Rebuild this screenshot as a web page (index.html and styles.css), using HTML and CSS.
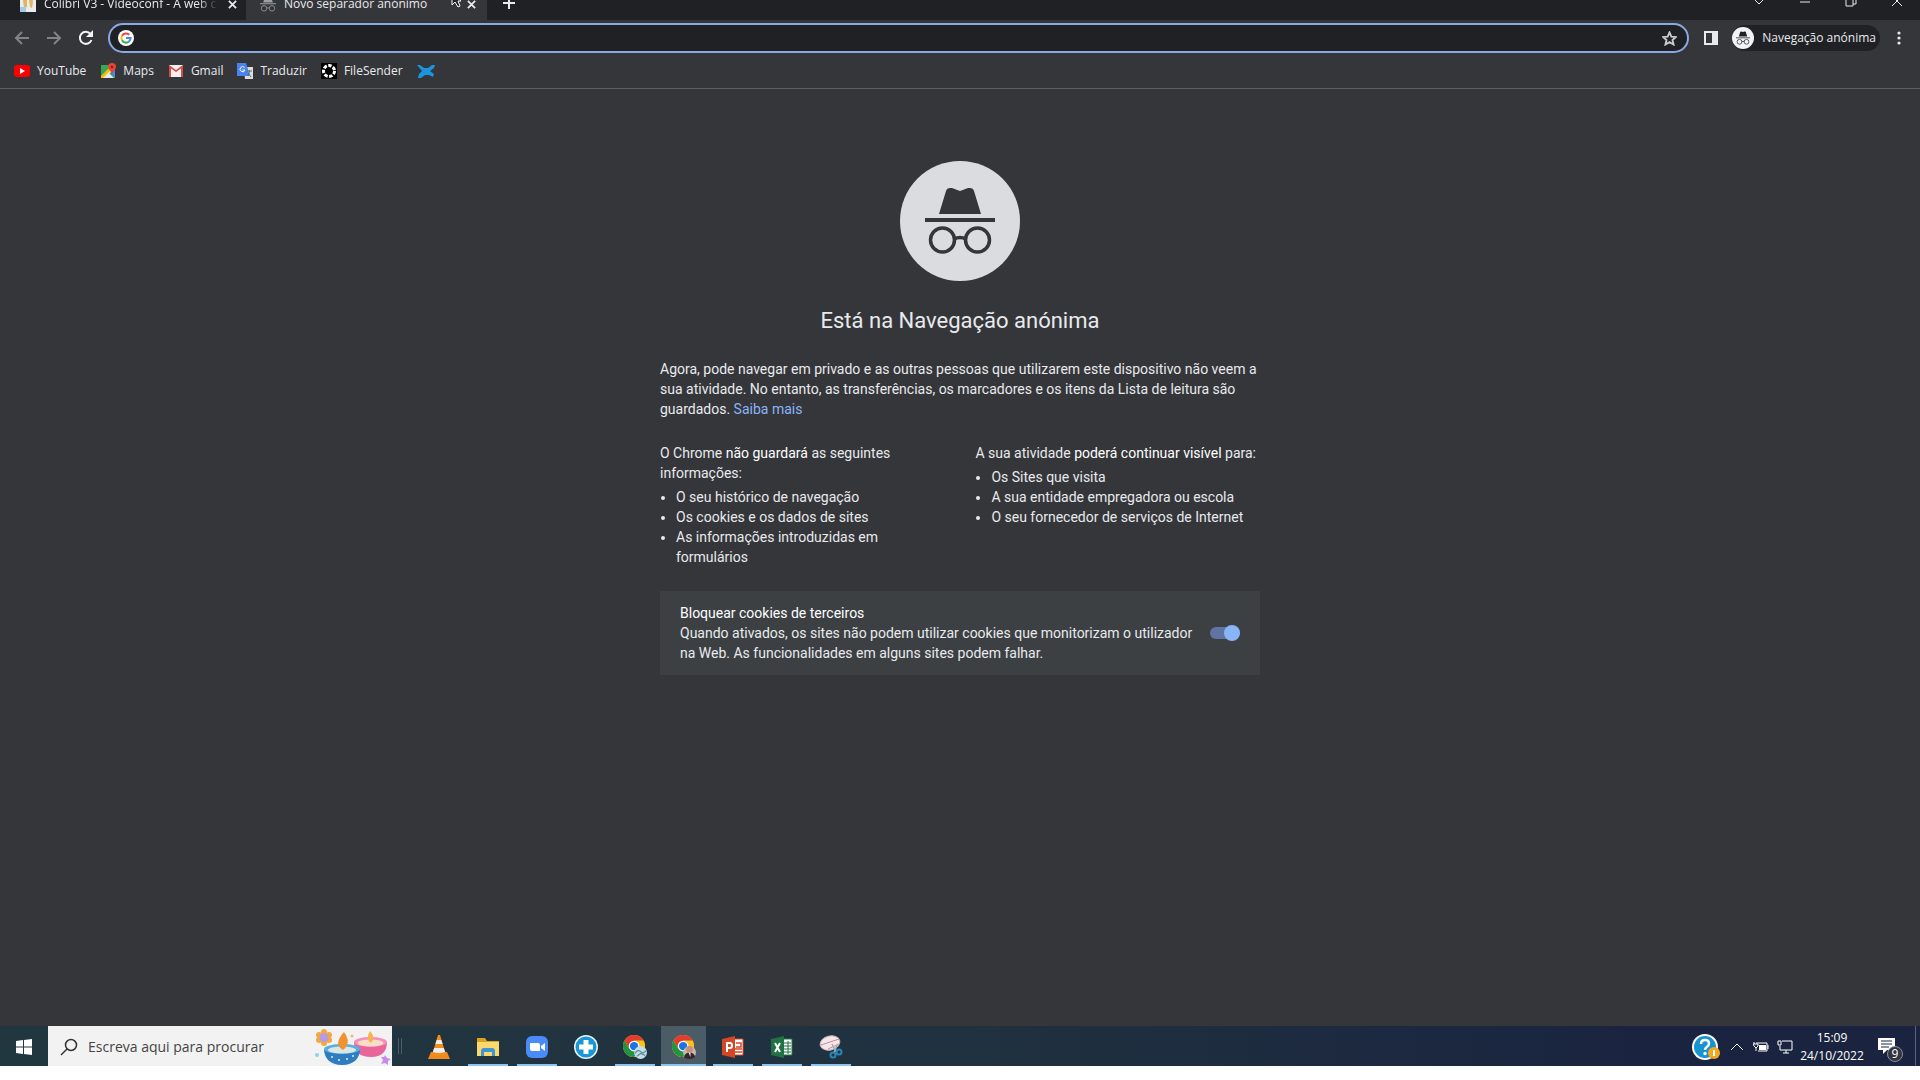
FILE: index.html
```html
<!DOCTYPE html>
<html lang="pt-PT">
<head>
<meta charset="utf-8">
<title>Novo separador anónimo</title>
<link rel="stylesheet" href="styles.css">
</head>
<body>
<svg class="defs" aria-hidden="true">
  <symbol id="spy" viewBox="0 0 70 68">
    <path fill="currentColor" d="M21 4q1-3 4-3l2 0 8 3 8-3 2 0q3 0 4 3l7 23H14zM0 31h70v4H0z"/>
    <g fill="none" stroke="currentColor" stroke-width="3.500"><circle cx="17.500" cy="53" r="12"/><circle cx="52.500" cy="53" r="12"/><path d="M29 52q6-3 12 0"/></g>
  </symbol>
  <symbol id="close" viewBox="0 0 10 10"><path d="M1 1l8 8M9 1L1 9" fill="none" stroke="currentColor" stroke-width="2"/></symbol>
  <symbol id="chrome" viewBox="0 0 24 24">
    <circle cx="12" cy="12" r="12" fill="#fbc116"/>
    <path fill="#e33b2e" d="M1.600 6A12 12 0 0 1 22.400 6H12L7 15z"/>
    <path fill="#229342" d="M1.600 6A12 12 0 0 0 12 24l5.200-9L12 12 6.800 15z"/>
    <circle cx="12" cy="12" r="5.800" fill="#fff"/><circle cx="12" cy="12" r="4.500" fill="#1a73e8"/>
  </symbol>
</svg>

<header class="browser">
  <div class="tabstrip">
    <div class="tab">
      <svg class="icon" viewBox="0 0 16 16"><path fill="#e8ecec" d="M0 0h16v16H0z"/><path fill="#e3b55c" d="M3 4q3-3 4 1v6l-3 1zM9 3q4-1 4 3l-1 6-2-1z"/><path fill="#a4c8e8" d="M0 11h6v5H0z"/></svg>
      <span class="tab-title faded">Colibri V3 - Videoconf - A web conferencing</span>
      <button class="tab-close" aria-label="Fechar separador"><svg><use href="#close"/></svg></button>
    </div>
    <div class="tab active">
      <svg class="icon muted"><use href="#spy"/></svg>
      <span class="tab-title">Novo separador anónimo</span>
      <svg class="pointer" viewBox="0 0 10 20"><path fill="#202124" stroke="#fff" d="M1 1v16l3-3 3 5 2-1-2-5h3z"/></svg>
      <button class="tab-close" aria-label="Fechar separador"><svg><use href="#close"/></svg></button>
    </div>
    <button class="new-tab" aria-label="Novo separador"><svg viewBox="0 0 12 12"><path d="M6 0v12M0 6h12" stroke="currentColor" stroke-width="2"/></svg></button>
    <div class="window-controls">
      <button aria-label="Pesquisar separadores"><svg viewBox="0 0 12 12"><path d="M2 5l4 4 4-4"/></svg></button>
      <button aria-label="Minimizar"><svg viewBox="0 0 12 12"><path d="M1 7h10"/></svg></button>
      <button aria-label="Restaurar"><svg viewBox="0 0 12 12"><path d="M1 3h7v8H1zM3 3V1h8v8H8"/></svg></button>
      <button aria-label="Fechar"><svg viewBox="0 0 12 12"><path d="M1 1l10 10M11 1L1 11"/></svg></button>
    </div>
  </div>

  <div class="toolbar">
    <button class="nav dim" aria-label="Recuar"><svg viewBox="0 0 16 16"><path d="M15 8H2M8 2L2 8l6 6"/></svg></button>
    <button class="nav dim" aria-label="Avançar"><svg viewBox="0 0 16 16"><path d="M1 8h13M8 2l6 6-6 6"/></svg></button>
    <button class="nav" aria-label="Atualizar"><svg viewBox="0 0 16 16"><path d="M13.500 10A6 6 0 1 1 12.500 4"/><path class="solid" d="M15 0v7H8z"/></svg></button>
    <div class="omnibox">
      <svg class="google" viewBox="0 0 16 16"><circle cx="8" cy="8" r="8" fill="#fff"/><g fill="none" stroke-width="2"><path stroke="#ea4335" d="M4 5.700A4.600 4.600 0 0 1 11.300 4.800"/><path stroke="#fbbc05" d="M4 5.700a4.600 4.600 0 0 0 0 4.600"/><path stroke="#34a853" d="M4 10.300a4.600 4.600 0 0 0 7 1.200"/><path stroke="#4285f4" d="M11 11.500A4.500 4.500 0 0 0 12.600 8H8"/></g></svg>
      <input type="text" aria-label="Barra de endereço">
      <button class="star" aria-label="Adicionar aos marcadores"><svg viewBox="0 0 16 16"><path d="M8 1.500l2 4.500 4.800.4-3.600 3.200 1.100 4.800L8 11.900l-4.300 2.500 1.100-4.800L1.200 6.400 6 6z"/></svg></button>
    </div>
    <button class="panel" aria-label="Painel lateral"><svg viewBox="0 0 14 14"><path fill="currentColor" fill-rule="evenodd" d="M0 0h14v14H0zM2 2v10h6V2z"/></svg></button>
    <button class="profile"><span class="avatar"><svg><use href="#spy"/></svg></span>Navegação anónima</button>
    <button class="menu" aria-label="Menu"><svg viewBox="0 0 4 14"><circle cx="2" cy="2" r="1.600"/><circle cx="2" cy="7" r="1.600"/><circle cx="2" cy="12" r="1.600"/></svg></button>
  </div>

  <nav class="bookmarks">
    <a href="#"><svg class="icon" viewBox="0 0 16 16"><rect y="2" width="16" height="12" rx="3" fill="#f00"/><path fill="#fff" d="M6 5l5 3-5 3z"/></svg>YouTube</a>
    <a href="#"><svg class="icon" viewBox="0 0 16 16"><path fill="#34a853" d="M1 2h14v13H1z"/><path fill="#4285f4" d="M9 8l6 6V7z"/><path fill="#e8eaed" d="M2 15l6-6 6 6zM12 2l3 3-8 8-2-2z"/><path fill="#fbbc05" d="M1 13L10 4l2 2-9 9H1z"/><path fill="#ea4335" d="M12 0a4 4 0 0 0-4 4c0 2 3 4 4 7 1-3 4-5 4-7a4 4 0 0 0-4-4z"/><circle cx="12" cy="4" r="1.300" fill="#8b1f16"/></svg>Maps</a>
    <a href="#"><svg class="icon" viewBox="0 0 16 16"><path fill="#f1f1f1" d="M1 2h14v12H1z"/><path fill="#d54b45" d="M1 2l7 5 7-5v2l-7 5-7-5zM1 3h2v11H1zM13 3h2v11h-2z"/></svg>Gmail</a>
    <a href="#"><svg class="icon" viewBox="0 0 16 16"><path fill="#dadce0" d="M7 4h9v12H8z"/><path fill="#4b83ec" d="M0 0h9l4 13H0z"/><path d="M7.500 4.500A2.500 2.500 0 1 0 8 7H5.500" fill="none" stroke="#fff"/><path d="M10 8h5M12.500 7v1c0 2-1 4-2 5M11 10l3 4" fill="none" stroke="#5f6b80"/></svg>Traduzir</a>
    <a href="#"><svg class="icon" viewBox="0 0 16 16"><path d="M0 0h16v16H0z"/><circle cx="8" cy="8" r="5.500" fill="none" stroke="#fff" stroke-width="3" stroke-dasharray="3.400 1.500"/></svg>FileSender</a>
    <a href="#" aria-label="Marcador"><svg class="bird" viewBox="0 0 18 16"><path fill="#1a94dc" d="M0 2l3 0 4 3h4l4-3 3 0-1 3-4 3 4 3-1 3-4-2H8l-4 3H1l1-4 3-3z"/></svg></a>
  </nav>
</header>

<main>
  <div class="content">
    <div class="hero"><svg><use href="#spy"/></svg></div>
    <h1>Está na Navegação anónima</h1>
    <p>Agora, pode navegar em privado e as outras pessoas que utilizarem este dispositivo não veem a sua atividade. No entanto, as transferências, os marcadores e os itens da Lista de leitura são guardados. <a href="#">Saiba mais</a></p>
    <div class="columns">
      <section>
        O Chrome <em>não guardará</em> as seguintes informações:
        <ul><li>O seu histórico de navegação</li><li>Os cookies e os dados de sites</li><li>As informações introduzidas em formulários</li></ul>
      </section>
      <section>
        A sua atividade <em>poderá continuar visível</em> para:
        <ul><li>Os Sites que visita</li><li>A sua entidade empregadora ou escola</li><li>O seu fornecedor de serviços de Internet</li></ul>
      </section>
    </div>
    <div class="cookies">
      <label for="block"><em>Bloquear cookies de terceiros</em><span>Quando ativados, os sites não podem utilizar cookies que monitorizam o utilizador na Web. As funcionalidades em alguns sites podem falhar.</span></label>
      <input type="checkbox" id="block" checked>
    </div>
  </div>
</main>

<footer class="taskbar">
  <button class="start" aria-label="Iniciar"><svg viewBox="0 0 16 16"><path fill="#fff" d="M0 2l7-1v6.500H0zM8 1l8-1v7.500H8zM0 8.500h7V15l-7-1zM8 8.500h8V16l-8-1z"/></svg></button>
  <div class="search">
    <svg class="lens" viewBox="0 0 18 18"><circle cx="11" cy="7" r="5.500"/><path d="M7 11l-6 6"/></svg>
    <input type="text" aria-label="Procurar" placeholder="Escreva aqui para procurar">
    <svg class="candles" viewBox="0 0 78 38">
      <g fill="#f3a93b"><circle cx="10" cy="4" r="3"/><circle cx="15" cy="7" r="3"/><circle cx="15" cy="12" r="3"/><circle cx="10" cy="15" r="3"/><circle cx="5" cy="12" r="3"/><circle cx="5" cy="7" r="3"/></g><circle cx="10" cy="9.500" r="4.500" fill="#b69ae8"/>
      <path fill="#e8649a" d="M40 14c0 10 6 15 17 15s16-6 16-15z"/><ellipse cx="56.500" cy="14" rx="16.500" ry="5" fill="#f38fb8"/><ellipse cx="56.500" cy="15" rx="13" ry="3.500" fill="#fbdcc8"/><path fill="#f7b24a" d="M56 3q6 6 1 12-6-4-1-12z"/>
      <path fill="#2d7dc0" d="M10 21c0 9 6 16 18 16s18-7 18-16z"/><ellipse cx="28" cy="21" rx="18" ry="5" fill="#5baee2"/><ellipse cx="28" cy="22" rx="14" ry="3.500" fill="#d8e8e4"/><path fill="#f29130" d="M30 4q8 11-1 18-10-6 1-18z"/>
      <g fill="#dff0fb"><circle cx="18" cy="29" r="1"/><circle cx="25" cy="32" r="1"/><circle cx="33" cy="31" r="1"/><circle cx="39" cy="28" r="1"/></g>
      <path fill="#c88be8" d="M71 27l2 3 4 1-3 2v4l-3-2-4 1 2-4-2-3h3z"/><circle cx="3" cy="27" r="2" fill="#8fd0ee"/><circle cx="38" cy="8" r="1.500" fill="#f3b85a"/>
    </svg>
  </div>
  <span class="grip"></span>
  <div class="apps">
    <button aria-label="VLC"><svg viewBox="0 0 24 24"><path fill="#f08a1d" d="M4 17h16l3 7H1z"/><path fill="#f28c1c" d="M11 0h2l6 20q-7 3-14 0z"/><path fill="#f1ede8" d="M9.700 5h4.600l1.300 4H8.400zM7.200 13h9.600l1.400 4q-6 2-12.400 0z"/></svg></button>
    <button class="open" aria-label="Explorador de ficheiros"><svg viewBox="0 0 24 24"><path fill="#d9a321" d="M1 3h8l2 3h12v5H1z"/><path fill="#fbd86c" d="M1 7h22v14H1z"/><path fill="#3f95d3" d="M5 21v-5q0-3 3-3h8q3 0 3 3v5h-3v-4H8v4z"/></svg></button>
    <button class="open" aria-label="Zoom"><svg viewBox="0 0 24 24"><rect x="1" y="1" width="22" height="22" rx="6" fill="#4a8cf7"/><path fill="#fff" d="M5 8h8q2 0 2 2v6H7q-2 0-2-2zM16 11l4-3v8l-4-3z"/></svg></button>
    <button aria-label="Suporte"><svg viewBox="0 0 24 24"><circle cx="12" cy="12" r="12" fill="#e8f6fc"/><circle cx="12" cy="12" r="10.500" fill="#1b96d5"/><path fill="#fff" d="M9.500 5h5v4.500H19v5h-4.500V19h-5v-4.500H5v-5h4.500z"/></svg></button>
    <button class="open" aria-label="Chrome"><svg viewBox="0 0 26 26"><use href="#chrome" width="24" height="24"/><circle cx="19" cy="19" r="7" fill="#c3dfe8"/><path d="M13 20q3-5 6-2t6-1M15 23l4-3 5 2" fill="none" stroke="#668b9c" stroke-width="1.500"/></svg></button>
    <button class="open current" aria-label="Chrome anónimo"><svg viewBox="0 0 26 26"><use href="#chrome" width="24" height="24"/><circle cx="19" cy="19" r="7" fill="#c7b7aa"/><path fill="#33262e" d="M13 24q1-5 6-5t6 5q-6 4-12 0z"/><circle cx="19" cy="15.500" r="3.500" fill="#c88e78"/><path fill="#fff" d="M18 19h2v5z"/></svg></button>
    <button class="open" aria-label="PowerPoint"><svg viewBox="0 0 24 24"><path fill="#fff" stroke="#d24726" d="M12 4h10v16H12z"/><path d="M15 8h5v4h-5M14 14h7M14 17h7" fill="none" stroke="#d24726" stroke-width="1.500"/><path fill="#d24726" d="M1 4l13-3v22L1 20z"/><path d="M6 17V8h3q2 0 2 2.500T9 13H6" fill="none" stroke="#fff" stroke-width="2"/></svg></button>
    <button class="open" aria-label="Excel"><svg viewBox="0 0 24 24"><path fill="#fff" stroke="#207245" d="M12 4h10v16H12z"/><path d="M14 8h7M14 11h7M14 14h7M14 17h7M18 6v13" stroke="#207245"/><path fill="#207245" d="M1 4l13-3v22L1 20z"/><path d="M5 8l5 9M10 8l-5 9" stroke="#fff" stroke-width="2"/></svg></button>
    <button class="open" aria-label="Ferramenta de recorte"><svg viewBox="0 0 24 24"><ellipse cx="11" cy="8" rx="10" ry="7" transform="rotate(-15 11 8)" fill="#f3e7ea" stroke="#c9b6bd"/><path d="M2 10l18-6M9 14L20 9" stroke="#c98a92"/><path d="M13 9l4 8M18 10l-3 8" stroke="#9fb0ba" stroke-width="1.500"/><circle cx="14" cy="20" r="2.500" fill="none" stroke="#2b86b8" stroke-width="2"/><circle cx="20" cy="17" r="2.500" fill="none" stroke="#2b86b8" stroke-width="2"/></svg></button>
  </div>
  <div class="tray">
    <button class="help" aria-label="Ajuda"><svg viewBox="0 0 28 28"><circle cx="13" cy="14" r="13" fill="#fff"/><circle cx="13" cy="14" r="11" fill="#1793cf"/><path d="M9 11q0-4 4-4t4 3.500q0 2-2 3.200t-2 3.300" fill="none" stroke="#fff" stroke-width="2.500"/><circle cx="13" cy="20.500" r="1.700" fill="#fff"/><circle cx="22" cy="20" r="6" fill="#f5a81c"/><path d="M22 17v6" stroke="#fff" stroke-width="2"/></svg></button>
    <button class="small" aria-label="Mostrar ícones ocultos"><svg viewBox="0 0 16 16"><path d="M2 11l6-6 6 6"/></svg></button>
    <button class="small" aria-label="Bateria"><svg viewBox="0 0 16 16"><path d="M5 4h9v8H5M15 6v4M3 8v4M1 3v2M4 3v2M0 5h5v2l-2 2-2-2z"/><path class="solid" d="M6 6h7v5H6z"/></svg></button>
    <button class="small" aria-label="Rede"><svg viewBox="0 0 16 16"><path d="M5 2h10v9H3V7M1 2h3v4H1zM9 11v3M6 14h6"/></svg></button>
    <div class="clock"><time>15:09</time><span>24/10/2022</span></div>
    <button class="notes" aria-label="Notificações"><svg viewBox="0 0 18 18"><path fill="#fff" d="M0 0h17v12h-8l-4 4v-4H0z"/><path d="M3 3h11M3 6h11M3 9h8" stroke="#1a2340"/></svg><span class="badge">9</span></button>
  </div>
</footer>
</body>
</html>
```
FILE: styles.css
```css
* { box-sizing: border-box; }
body {
  margin: 0;
  min-height: 100vh;
  display: flex;
  flex-direction: column;
  background: #fff;
  font: 12px/16px "Open Sans", "Noto Sans", sans-serif;
  color: #e8eaed;
}
button {
  display: flex;
  align-items: center;
  justify-content: center;
  flex: none;
  padding: 0;
  border: 0;
  background: none;
  color: inherit;
  font: inherit;
}
svg { display: block; flex: none; }
a { color: inherit; text-decoration: none; }
em { font-style: normal; color: #fff; }
.defs { position: absolute; width: 0; height: 0; }
.icon { width: 16px; height: 16px; }

.browser { background: #35363a; border-bottom: 1px solid #5b5d61; }
.tabstrip {
  display: flex;
  align-items: flex-end;
  height: 20px;
  overflow: hidden;
  background: #202124;
}
.tab {
  display: flex;
  align-items: center;
  gap: 8px;
  flex: none;
  width: 246px;
  height: 32px;
  padding: 0 8px 0 20px;
}
.tab.active { width: 241px; padding: 0 10px 0 14px; background: #35363a; border-radius: 8px 8px 0 0; }
.tab-title { flex: 1; overflow: hidden; white-space: nowrap; }
.faded { mask-image: linear-gradient(90deg, #000 88%, transparent); }
.tab-close { width: 12px; height: 16px; }
.tab-close svg { width: 9px; height: 9px; }
.muted { color: #9aa0a6; }
.active .tab-close { margin-left: -4px; }
.pointer { width: 10px; height: 20px; align-self: flex-start; }
.new-tab { width: 44px; height: 34px; }
.new-tab svg { width: 12px; height: 12px; }
.window-controls { display: flex; margin-left: auto; }
.window-controls button { width: 46px; height: 38px; }
.window-controls svg { width: 12px; height: 12px; fill: none; stroke: #e8eaed; }

.toolbar { display: flex; align-items: center; height: 36px; padding: 0 11px 0 8px; }
.nav { width: 32px; height: 32px; margin-left: -2px; margin-right: 2px; }
.nav svg { width: 16px; height: 16px; fill: none; stroke: #f1f3f4; stroke-width: 2; }
.nav .solid { fill: #f1f3f4; stroke: none; }
.nav.dim svg { stroke: #808387; }
.omnibox {
  display: flex;
  align-items: center;
  flex: 1;
  height: 30px;
  margin: 0 12px 0 4px;
  padding: 0 10px 0 8px;
  background: #202124;
  border: 2px solid #8aa9e4;
  border-radius: 16px;
}
.omnibox input { flex: 1; border: 0; outline: 0; background: none; color: #fff; font: inherit; }
.google { width: 16px; height: 16px; }
.star svg { width: 15px; height: 15px; fill: none; stroke: #c7c9cc; stroke-width: 2; }
.panel svg { width: 14px; height: 14px; }
.panel { width: 20px; }
.profile {
  gap: 8px;
  height: 26px;
  margin: 0 9px 0 11px;
  padding-right: 4px;
  border-radius: 13px;
  background: #202124;
}
.avatar { display: grid; place-items: center; width: 22px; height: 22px; border-radius: 50%; background: #f1f3f4; color: #202124; }
.avatar svg { width: 14px; height: 14px; }
.menu { width: 20px; }
.menu svg { width: 4px; height: 14px; fill: #e8eaed; }

.bookmarks { display: flex; align-items: center; gap: 14px; height: 32px; padding: 0 14px 3px; }
.bookmarks a { display: flex; align-items: center; gap: 7px; }
.bird { width: 18px; height: 16px; }

main { flex: 1; padding: 72px 24px 0; background: #35363a; font: 14px/20px Roboto, sans-serif; }
.content { max-width: 600px; margin: 0 auto; }
.hero { display: grid; place-items: center; width: 120px; height: 120px; margin: 0 auto; border-radius: 50%; background: #dadce0; color: #35363a; }
.hero svg { width: 70px; height: 68px; }
h1 { margin: 26px 0 24px; font-size: 22px; line-height: 28px; font-weight: 400; text-align: center; }
p { margin: 0; }
p a { color: #8ab4f8; }
.columns { display: flex; justify-content: space-between; margin-top: 24px; padding-right: 4px; }
.columns section { max-width: 285px; }
.columns section:first-child { width: 240px; }
ul { margin: 4px 0 0; padding-left: 16px; }
.cookies { display: flex; align-items: center; gap: 16px; margin-top: 24px; padding: 12px 20px; background: #3c4043; }
.cookies label { flex: 1; }
.cookies em, .cookies span { display: block; }
.cookies input {
  appearance: none;
  display: flex;
  align-items: center;
  justify-content: flex-end;
  width: 30px;
  height: 12px;
  margin: 0;
  border-radius: 6px;
  background: #5f74a3;
}
.cookies input::before { content: ""; width: 16px; height: 16px; border-radius: 50%; background: #8ab4f8; }

.taskbar {
  display: flex;
  height: 40px;
  margin-bottom: 14px;
  padding-right: 4px;
  background: linear-gradient(90deg, #213740, #20313f 50%, #1a2440 85%);
  color: #fff;
}
.start { width: 48px; padding-top: 2px; }
.start svg { width: 16px; height: 16px; }
.search { display: flex; align-items: center; width: 344px; padding: 1px 0 0 12px; background: #f2f2f2; }
.lens { width: 18px; height: 18px; fill: none; stroke: #333; stroke-width: 1.5; }
.search input { flex: 1; min-width: 0; padding: 0 0 0 10px; border: 0; outline: 0; background: none; font: inherit; font-size: 14px; }
.search input::placeholder { color: #444; opacity: 1; }
.candles { width: 78px; height: 38px; }
.grip { width: 4px; height: 16px; margin: 12px 14px 0 6px; border: solid #4b5d66; border-width: 0 1px; }
.apps { display: flex; gap: 4px; }
.apps button { width: 45px; padding: 4px 2px 2px; background-repeat: no-repeat; }
.apps .open {
  background-image: linear-gradient(#8cc4ee, #8cc4ee);
  background-position: center bottom;
  background-size: 40px 2px;
}
.apps .current { background-color: #4c5c66; background-size: 45px 2px; }
.apps svg { width: 24px; height: 24px; }
.tray { display: flex; align-items: center; margin-left: auto; padding-top: 1px; border-right: 1px solid #5a6680; }
.help svg { width: 28px; height: 28px; }
.help { margin-right: 5px; }
.small { width: 24px; height: 24px; }
.small svg { width: 16px; height: 16px; fill: none; stroke: #fff; }
.small .solid { fill: #fff; stroke: none; }
.clock { display: flex; flex-direction: column; width: 70px; text-align: center; line-height: 18px; }
.notes { position: relative; width: 48px; height: 38px; padding-right: 8px; }
.notes svg { width: 18px; height: 18px; }
.badge { position: absolute; left: 20px; top: 18px; width: 16px; height: 16px; border-radius: 50%; border: 1px solid #8a8f99; background: #30343f; line-height: 14px; }
```
